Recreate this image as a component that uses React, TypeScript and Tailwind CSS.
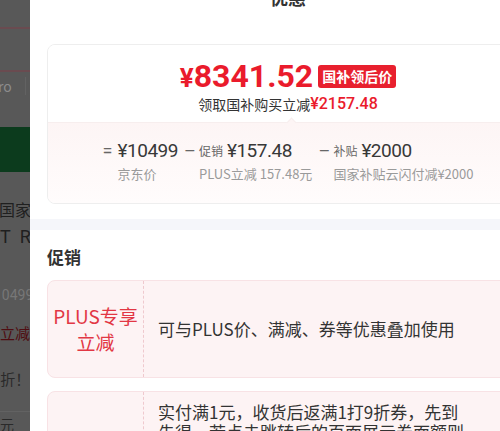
import React from 'react';

const cjk = { fontFamily: '"Noto Sans CJK SC", "Noto Sans", sans-serif' };
const num = { fontFamily: 'Roboto, "Noto Sans CJK SC", sans-serif' };

// 左侧被遮罩的商品页一角
function Backdrop() {
  return (
    <div className="w-[30px] shrink-0 h-[431px] overflow-hidden bg-[#585858] text-[#1f1f1f]" style={cjk}>
      <div className="h-[27px]" />
      <div className="h-[2px] bg-[#6a4b50]" />
      <div className="h-[41px]" />
      <div className="h-[2px] bg-[#6a4b50]" />
      <div className="h-[28px] flex items-center">
        <span className="text-[14px] leading-none text-[#8c8c8c] -ml-[2px]">ro</span>
        <span className="ml-auto mr-[4px] w-px h-[18px] bg-[#626262]" />
      </div>
      <div className="h-[27px]" />
      <div className="h-[45px] bg-[#0c3b1d]" />
      <div className="h-[26px]" />
      <div className="text-[16px] leading-[22px] whitespace-nowrap -ml-[1px]">国家</div>
      <div className="text-[18px] leading-[26px] whitespace-nowrap tracking-[9px] mt-[4px]" style={num}>TR</div>
      <div className="h-[36px]" />
      <div className="text-[14px] leading-[18px] text-[#777] whitespace-nowrap -ml-[6px]" style={num}>10499</div>
      <div className="h-[20px]" />
      <div className="text-[15px] leading-[18px] text-[#4f0d11] whitespace-nowrap">立减后</div>
      <div className="h-[28px]" />
      <div className="text-[15px] leading-[18px] text-[#2a2a2a] whitespace-nowrap -ml-[8px]">9折！</div>
      <div className="h-[23px]" />
      <div className="h-px bg-[#626262]" />
      <div className="text-[14px] leading-[18px] text-[#2a2a2a] whitespace-nowrap mt-[3px]">元</div>
    </div>
  );
}

function Col({ op, tag, value, label }: { op: string; tag?: string; value: string; label: string }) {
  return (
    <div className="flex">
      <span className="w-[15px] text-[18px] leading-[26px] text-[#666]" style={num}>{op}</span>
      <div className="flex flex-col">
        <div className="flex items-center h-[26px] whitespace-nowrap">
          {tag && <span className="text-[12px] text-[#666] mr-[4px]" style={cjk}>{tag}</span>}
          <span className="text-[19px] tracking-[-0.5px] text-[#383838]" style={num}>{value}</span>
        </div>
        <span className="mt-[2px] text-[13px] leading-[16px] text-[#9a9a9a] whitespace-nowrap" style={cjk}>{label}</span>
      </div>
    </div>
  );
}

function PriceCard() {
  return (
    <div className="rounded-[8px] border border-[#eeeeee] overflow-hidden">
      <div className="h-[77px] bg-white flex flex-col items-center pt-[13px]">
        <div className="flex items-center h-[36px]">
          <span className="text-[32px] font-bold text-[#ea1b2c] leading-none" style={num}>
            <span className="text-[26px]">¥</span>8341.52
          </span>
          <span className="ml-[5px] h-[23px] px-[4px] rounded-[3px] bg-[#e8202e] text-white text-[14px] font-bold leading-[23px]" style={cjk}>
            国补领后价
          </span>
        </div>
        <div className="h-[18px] mt-[1px] flex items-center text-[14px] leading-[18px] text-[#333]" style={cjk}>
          领取国补购买立减
          <span className="text-[16px] font-medium text-[#ea1b2c]" style={num}>¥2157.48</span>
        </div>
      </div>
      <div className="relative h-[81px] bg-gradient-to-b from-[#fdf5f5] to-[#fffcfc] border-t border-[#f7eeee] flex justify-center gap-[6px] pt-[15px]">
        <span className="absolute left-[240px] -top-[4px] w-[7px] h-[7px] rotate-45 bg-[#fdf5f5] border-l border-t border-[#f7eeee]" />
        <Col op="=" value="¥10499" label="京东价" />
        <Col op="–" tag="促销" value="¥157.48" label="PLUS立减 157.48元" />
        <Col op="–" tag="补贴" value="¥2000" label="国家补贴云闪付减¥2000" />
      </div>
    </div>
  );
}

function PromoItem({ title, text, top }: { title: React.ReactNode; text: string; top?: boolean }) {
  return (
    <div className="flex h-[98px] rounded-[8px] border border-[#f8e2e5] bg-[#fdf3f4] overflow-hidden">
      <div className="w-[96px] shrink-0 border-r border-dashed border-[#efc9ce] flex items-center justify-center text-center text-[19px] leading-[26px] text-[#e23744]">
        {title}
      </div>
      <div className={`flex-1 pl-[14px] flex ${top ? 'items-start pt-[10px]' : 'items-center'}`}>
        <p className="w-[310px] text-[17px] leading-[20px] text-[#333]">{text}</p>
      </div>
    </div>
  );
}

export default function App() {
  return (
    <div className="w-[500px] h-[431px] overflow-hidden flex bg-[#585858]">
      <Backdrop />
      <div className="w-[516px] shrink-0 h-[431px] bg-white" style={cjk}>
        <div className="h-[44px] flex justify-center">
          <span className="-mt-[15px] text-[18px] leading-[24px] font-bold text-[#333]">优惠</span>
        </div>
        <div className="px-[17px]">
          <PriceCard />
        </div>
        <div className="h-[15px]" />
        <div className="h-[11px] bg-[#f5f6fa]" />
        <div className="px-[17px] pt-[16px]">
          <h2 className="text-[17px] leading-[22px] font-bold text-[#333]">促销</h2>
          <div className="mt-[12px] flex flex-col gap-[13px]">
            <PromoItem title={<>PLUS专享<br />立减</>} text="可与PLUS价、满减、券等优惠叠加使用" />
            <PromoItem
              top
              title={<>满额返券</>}
              text="实付满1元，收货后返满1打9折券，先到先得，若点击跳转后的页面展示券面额则以跳转页面为准"
            />
          </div>
        </div>
      </div>
    </div>
  );
}
